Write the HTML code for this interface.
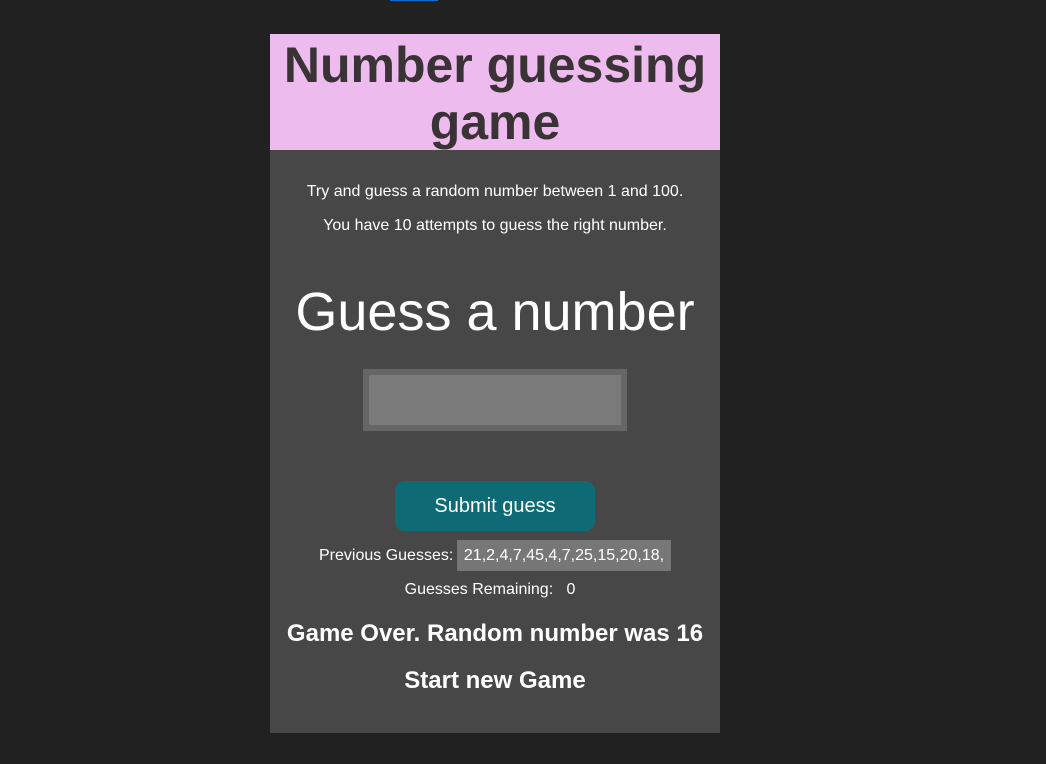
<!DOCTYPE html>
<html><head><style>
body{margin:0;width:1046px;height:764px;background:#212121;font-family:"Liberation Sans",Arial,sans-serif;position:relative;overflow:hidden}
.a{position:absolute;left:0;width:450px;text-align:center;color:#fff;white-space:nowrap}
</style></head><body>
<div style="position:absolute;left:390px;top:0;width:48px;height:1px;background:#0a6fd0"></div>
<div style="position:absolute;left:270px;top:34px;width:450px;height:699px;background:#474747">
 <div style="position:absolute;left:0;top:0;width:450px;height:116px;background:#edbbed"></div>
 <div class="a" style="top:3px;font-size:50px;font-weight:bold;line-height:57px;color:#3a3335">Number guessing<br>game</div>
 <div class="a" style="top:148px;font-size:16px;line-height:20px">Try and guess a random number between 1 and 100.</div>
 <div class="a" style="top:182px;font-size:16px;line-height:20px">You have 10 attempts to guess the right number.</div>
 <div class="a" style="top:247px;font-size:54px;line-height:62px">Guess a number</div>
 <div style="position:absolute;left:93px;top:335px;width:252px;height:50px;border:6px solid #666;background:#7a7a7a"></div>
 <div style="position:absolute;left:125px;top:447px;width:200px;height:50px;border-radius:10px;background:#0e6b75;color:#fff;font-size:20px;line-height:50px;text-align:center">Submit guess</div>
 <div style="position:absolute;left:49px;top:513px;font-size:16px;color:#fff;line-height:18px">Previous Guesses:</div>
 <div style="position:absolute;left:187px;top:506px;width:214px;height:31px;background:#777;color:#fff;font-size:16px;line-height:31px;text-align:center">21,2,4,7,45,4,7,25,15,20,18,</div>
 <div class="a" style="top:547px;font-size:16px;line-height:18px;left:-5px">Guesses Remaining:&nbsp;&nbsp;&nbsp;0</div>
 <div class="a" style="top:586px;font-size:24px;font-weight:bold;line-height:28px">Game Over. Random number was 16</div>
 <div class="a" style="top:633px;font-size:24px;font-weight:bold;line-height:28px">Start new Game</div>
</div>
</body></html>
